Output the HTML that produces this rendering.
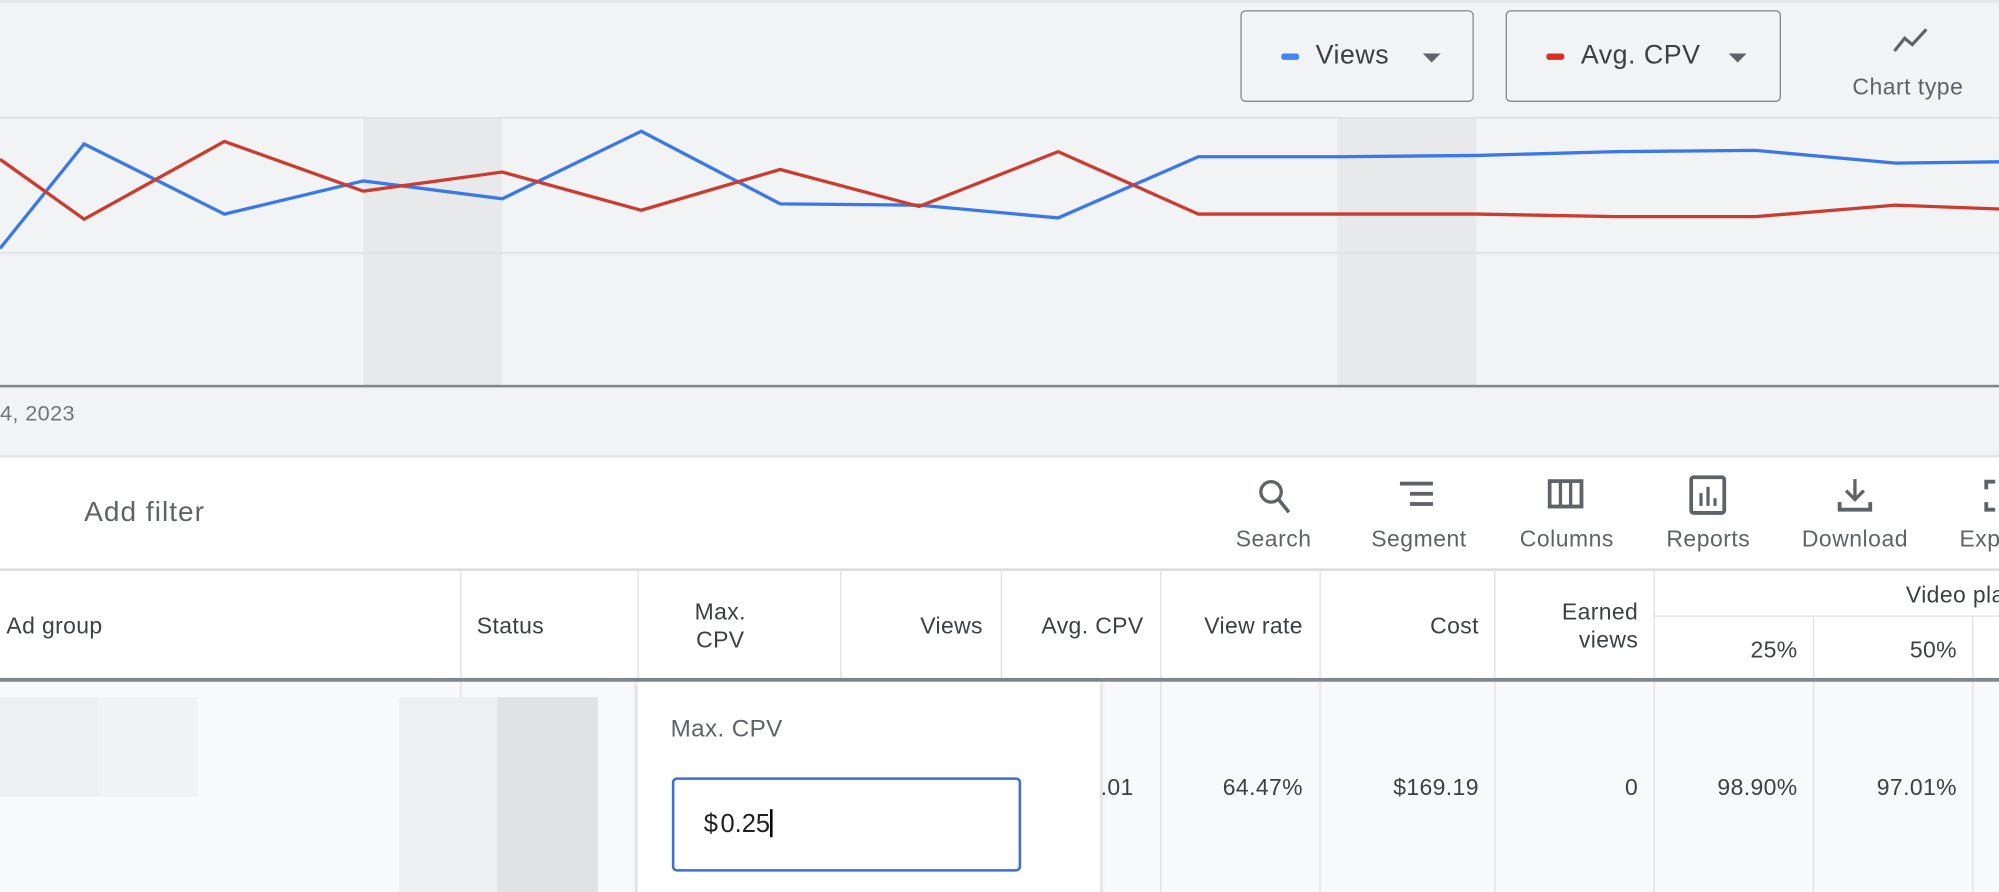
<!DOCTYPE html>
<html><head><meta charset="utf-8"><style>
html,body{margin:0;padding:0;width:1999px;height:892px;overflow:hidden;background:#fff}
#w{position:absolute;left:0;top:0;width:1568px;height:700px;overflow:hidden;transform:scale(1.27487,1.27429);transform-origin:0 0;font-family:"Liberation Sans",Arial,sans-serif;color:#3c4043}
.a{position:absolute;white-space:nowrap}
.btn{position:absolute;top:8px;height:72px;border:1px solid #80868b;border-radius:4px;box-sizing:border-box;font-size:21px;letter-spacing:.4px;color:#3c4043}
.tb{position:absolute;top:413px;font-size:18px;letter-spacing:.4px;color:#5f6368;text-align:center;width:120px;white-space:nowrap}
.h{position:absolute;font-size:18px;letter-spacing:.3px;color:#3c4043;line-height:22px;white-space:nowrap}
.vl{position:absolute;top:448px;width:1px;height:252px;background:#e0e0e0}
.v{position:absolute;top:608px;font-size:18px;letter-spacing:.3px;color:#3c4043;white-space:nowrap}
</style></head><body><div id="w">
<div class="a" style="left:0;top:0;width:1568px;height:358px;background:#f1f3f4"></div>
<div class="a" style="left:0;top:0;width:1568px;height:2px;background:#e4e6e8"></div>
<div class="btn" style="left:973px;width:183px"><div class="a" style="left:31px;top:33px;width:14px;height:5px;border-radius:2px;background:#4285f4"></div><div class="a" style="left:58px;top:23px">Views</div><div class="a" style="left:142px;top:33px;border-left:7px solid transparent;border-right:7px solid transparent;border-top:7px solid #5f6368"></div></div>
<div class="btn" style="left:1181px;width:216px"><div class="a" style="left:31px;top:33px;width:14px;height:5px;border-radius:2px;background:#d93025"></div><div class="a" style="left:58px;top:23px">Avg. CPV</div><div class="a" style="left:174px;top:33px;border-left:7px solid transparent;border-right:7px solid transparent;border-top:7px solid #5f6368"></div></div>
<svg class="a" style="left:1484px;top:20px" width="30" height="26" viewBox="0 0 30 26"><polyline points="2,20 10,10 16,15 27,3" fill="none" stroke="#5f6368" stroke-width="2.5"/></svg>
<div class="a" style="left:1453px;top:58px;font-size:18px;letter-spacing:.4px;color:#5f6368">Chart type</div>
<div class="a" style="left:285px;top:93px;width:109px;height:210px;background:#e8e9eb"></div>
<div class="a" style="left:1049px;top:93px;width:109px;height:210px;background:#e8e9eb"></div>
<div class="a" style="left:0;top:92px;width:1568px;height:1px;background:#dadce0"></div>
<div class="a" style="left:0;top:198px;width:1568px;height:1px;background:#dadce0"></div>
<div class="a" style="left:0;top:302px;width:1568px;height:2px;background:#80868b"></div>
<svg class="a" style="left:0;top:0" width="1568" height="310">
<polyline fill="none" stroke="#3b78e7" stroke-width="2.6" points="0,195 66,113 176,168 285,142 394,156 503,103 612,160 721,161 830,171 940,123 1049,123 1158,122 1268,119 1377,118 1487,128 1568,127"/>
<polyline fill="none" stroke="#cc3b30" stroke-width="2.6" points="0,125 66,172 176,111 285,150 394,135 503,165 612,133 721,162 830,119 940,168 1049,168 1158,168 1268,170 1377,170 1487,161 1568,164"/>
</svg>
<div class="a" style="left:0;top:315px;font-size:17px;letter-spacing:.3px;color:#70757a">4, 2023</div>
<div class="a" style="left:0;top:357px;width:1568px;height:2px;background:#e2e4e6"></div>
<div class="a" style="left:66px;top:389px;font-size:22px;letter-spacing:.8px;color:#5f6368">Add filter</div>
<svg class="a" style="left:985px;top:374px" width="30" height="32"><circle cx="12" cy="12" r="8" fill="none" stroke="#5f6368" stroke-width="2.6"/><line x1="18" y1="18" x2="26" y2="28" stroke="#5f6368" stroke-width="2.8"/></svg>
<svg class="a" style="left:1098px;top:376px" width="30" height="26"><rect x="0" y="2" width="26" height="3" fill="#5f6368"/><rect x="8" y="10" width="18" height="3" fill="#5f6368"/><rect x="8" y="18" width="18" height="3" fill="#5f6368"/></svg>
<svg class="a" style="left:1214px;top:376px" width="30" height="26"><rect x="1.5" y="1.5" width="25" height="20" fill="none" stroke="#5f6368" stroke-width="3"/><line x1="10" y1="2" x2="10" y2="21" stroke="#5f6368" stroke-width="2.6"/><line x1="18" y1="2" x2="18" y2="21" stroke="#5f6368" stroke-width="2.6"/></svg>
<svg class="a" style="left:1325px;top:373px" width="30" height="32"><rect x="1.5" y="1.5" width="26" height="28" rx="2" fill="none" stroke="#5f6368" stroke-width="3"/><rect x="8" y="14" width="2.5" height="10" fill="#5f6368"/><rect x="13.5" y="9" width="2.5" height="15" fill="#5f6368"/><rect x="19" y="18" width="2.5" height="6" fill="#5f6368"/></svg>
<svg class="a" style="left:1441px;top:374px" width="30" height="30"><line x1="14" y1="2" x2="14" y2="18" stroke="#5f6368" stroke-width="2.6"/><polyline points="7,11 14,18 21,11" fill="none" stroke="#5f6368" stroke-width="2.6"/><polyline points="2,20 2,26 26,26 26,20" fill="none" stroke="#5f6368" stroke-width="3"/></svg>
<svg class="a" style="left:1556px;top:376px" width="12" height="28"><polyline points="9,2 2,2 2,8" fill="none" stroke="#5f6368" stroke-width="3"/><polyline points="2,18 2,24 9,24" fill="none" stroke="#5f6368" stroke-width="3"/></svg>
<div class="tb" style="left:939px">Search</div>
<div class="tb" style="left:1053px">Segment</div>
<div class="tb" style="left:1169px">Columns</div>
<div class="tb" style="left:1280px">Reports</div>
<div class="tb" style="left:1395px">Download</div>
<div class="a" style="left:1537px;top:413px;font-size:18px;letter-spacing:.4px;color:#5f6368">Export</div>
<div class="a" style="left:0;top:446px;width:1568px;height:2px;background:#dadce0"></div>
<div class="a" style="left:0;top:535px;width:1568px;height:165px;background:#f8f9fa"></div>
<div class="vl" style="left:361px"></div><div class="vl" style="left:500px"></div><div class="vl" style="left:659px"></div><div class="vl" style="left:785px"></div><div class="vl" style="left:910px"></div><div class="vl" style="left:1035px"></div><div class="vl" style="left:1172px"></div><div class="vl" style="left:1297px"></div><div class="vl" style="left:1422px;top:484px;height:216px"></div><div class="vl" style="left:1547px;top:484px;height:216px"></div>
<div class="a" style="left:1298px;top:483px;width:270px;height:1px;background:#e0e0e0"></div>
<div class="a" style="left:0;top:532px;width:1568px;height:3px;background:#80868b"></div>
<div class="h" style="left:5px;top:480px">Ad group</div>
<div class="h" style="left:374px;top:480px">Status</div>
<div class="h" style="left:500px;width:130px;top:469px;text-align:center">Max.<br>CPV</div>
<div class="h" style="left:660px;width:111px;top:480px;text-align:right">Views</div>
<div class="h" style="left:786px;width:111px;top:480px;text-align:right">Avg. CPV</div>
<div class="h" style="left:911px;width:111px;top:480px;text-align:right">View rate</div>
<div class="h" style="left:1036px;width:124px;top:480px;text-align:right">Cost</div>
<div class="h" style="left:1173px;width:112px;top:469px;text-align:right">Earned<br>views</div>
<div class="h" style="left:1495px;top:456px">Video played</div>
<div class="h" style="left:1298px;width:112px;top:499px;text-align:right">25%</div>
<div class="h" style="left:1423px;width:112px;top:499px;text-align:right">50%</div>
<div class="a" style="left:0;top:547px;width:77px;height:78px;background:#eeeff1"></div>
<div class="a" style="left:77px;top:547px;width:78px;height:78px;background:#f1f2f3"></div>
<div class="a" style="left:313px;top:547px;width:77px;height:153px;background:#eeeff1"></div>
<div class="a" style="left:390px;top:547px;width:79px;height:153px;background:#e1e2e4"></div>
<div class="v" style="left:857px">).01</div>
<div class="v" style="left:911px;width:111px;text-align:right">64.47%</div>
<div class="v" style="left:1036px;width:124px;text-align:right">$169.19</div>
<div class="v" style="left:1173px;width:112px;text-align:right">0</div>
<div class="v" style="left:1298px;width:112px;text-align:right">98.90%</div>
<div class="v" style="left:1423px;width:112px;text-align:right">97.01%</div>
<div class="a" style="left:500px;top:535px;width:363px;height:180px;background:#fff;box-shadow:0 1px 4px rgba(0,0,0,.3)"></div>
<div class="a" style="left:526px;top:562px;font-size:19px;letter-spacing:.3px;color:#5f6368">Max. CPV</div>
<div class="a" style="left:527px;top:610px;width:274px;height:74px;box-sizing:border-box;border:2.5px solid #3b6fd4;border-radius:4px;background:#fff"></div>
<div class="a" style="left:552px;top:635px;font-size:20px;color:#202124">$<span style="margin-left:2px">0.25</span><span style="display:inline-block;width:1.5px;height:22px;background:#000;vertical-align:-4px"></span></div>
</div></body></html>
